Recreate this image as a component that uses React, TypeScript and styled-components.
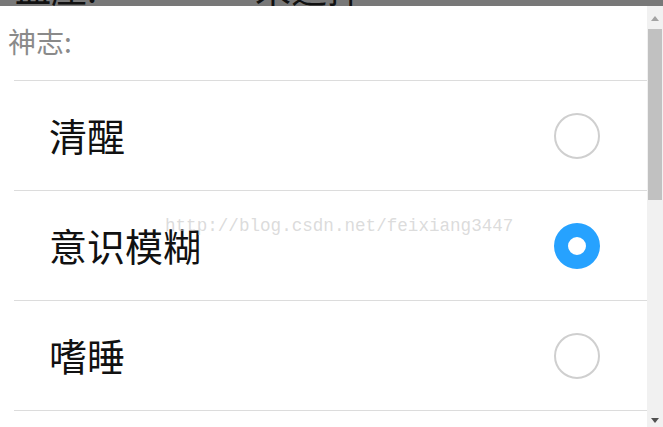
import React from 'react'
import styled, { createGlobalStyle } from 'styled-components'

const GlobalStyle = createGlobalStyle`
  html, body {
    margin: 0;
    padding: 0;
    background: #ffffff;
    overflow: hidden;
  }
  body {
    font-family: "Noto Sans CJK SC", "Noto Sans", sans-serif;
  }
`;

// dimmed page behind the popup, only its bottom edge shows
const Backdrop = styled.div`
  height: 6px;
  overflow: hidden;
  background: #787878;
  display: grid;
  grid-template-columns: 240px auto;
  padding-left: 15px;
`;

const BackdropText = styled.div`
  font-size: 36px;
  line-height: 36px;
  margin-top: -31px;
  color: #111;
`;

const Panel = styled.div`
  display: flex;
  height: 421px;
  background: #fff;
`;

const Content = styled.div`
  flex: 1;
  position: relative;
`;

const Label = styled.div`
  height: 74px;
  box-sizing: border-box;
  padding: 19px 0 0 8px;
  font-size: 28px;
  line-height: 33px;
  color: #8a8a8a;
`;

const List = styled.div`
  margin-left: 14px;
  border-bottom: 1px solid #dcdcdc;
`;

const Option = styled.div`
  height: 110px;
  box-sizing: border-box;
  border-top: 1px solid #dcdcdc;
  display: flex;
  align-items: center;
  justify-content: space-between;
  padding: 0 47px 0 35px;
`;

const OptionText = styled.span`
  font-size: 38px;
  color: #111;
  margin-top: -3px;
`;

const Radio = styled.span<{ $checked?: boolean }>`
  width: 46px;
  height: 46px;
  box-sizing: border-box;
  border-radius: 50%;
  border: ${p => (p.$checked ? '14px solid #26a2ff' : '2px solid #cfcfcf')};
  background: #fff;
`;

const Watermark = styled.div`
  position: absolute;
  left: 165px;
  top: 210px;
  font-family: "Liberation Mono", monospace;
  font-size: 17.6px;
  color: rgba(200, 200, 200, 0.65);
  pointer-events: none;
`;

const Scrollbar = styled.div`
  width: 16px;
  background: #f1f1f1;
  display: flex;
  flex-direction: column;
`;

const ArrowButton = styled.div<{ $down?: boolean }>`
  height: ${p => (p.$down ? '14px' : '22px')};
  display: flex;
  align-items: center;
  justify-content: center;
  &::after {
    content: '';
    width: 0;
    height: 0;
    border-left: 4px solid transparent;
    border-right: 4px solid transparent;
    ${p => (p.$down
      ? 'border-top: 5px solid #505050;'
      : 'border-bottom: 5px solid #a3a3a3; margin-top: 2px;')}
  }
`;

const Thumb = styled.div`
  height: 171px;
  margin: 1px 1px 0 1px;
  background: #c1c1c1;
`;

const Track = styled.div`
  flex: 1;
`;

const options = [
  { label: '清醒', checked: false },
  { label: '意识模糊', checked: true },
  { label: '嗜睡', checked: false },
];

const App = () => (
  <>
    <GlobalStyle />
    <Backdrop>
      <BackdropText>血压:</BackdropText>
      <BackdropText>未选择</BackdropText>
    </Backdrop>
    <Panel>
      <Content>
        <Label>神志:</Label>
        <List>
          {options.map(o => (
            <Option key={o.label}>
              <OptionText>{o.label}</OptionText>
              <Radio $checked={o.checked} />
            </Option>
          ))}
        </List>
        <Watermark>http://blog.csdn.net/feixiang3447</Watermark>
      </Content>
      <Scrollbar>
        <ArrowButton />
        <Thumb />
        <Track />
        <ArrowButton $down />
      </Scrollbar>
    </Panel>
  </>
);

export default App;
